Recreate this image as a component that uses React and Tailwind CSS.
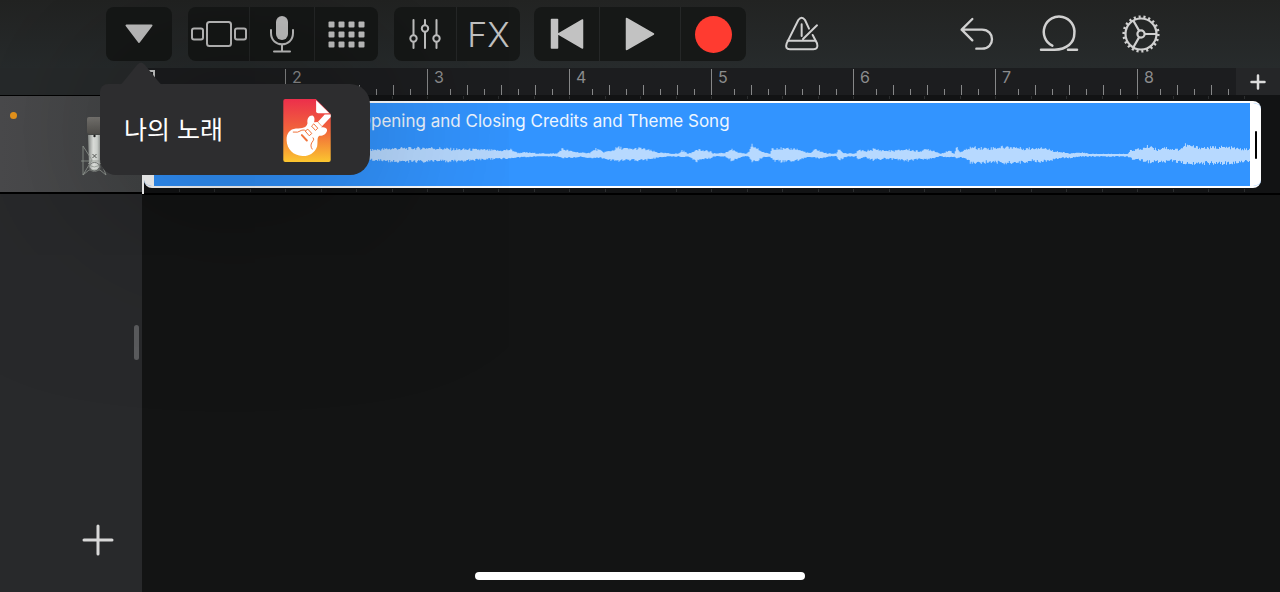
import React from "react";

const BARS = [1, 2, 3, 4, 5, 6, 7, 8];

// [x, height above the centre line, height below it], in thirds of a pixel
const ENVELOPE = [
  [0, 14, 14], [60, 18, 16], [120, 10, 12], [180, 16, 14], [216, 14, 13], [237, 18, 18], [275, 20, 18],
  [300, 16, 17], [325, 15, 13], [345, 12, 10], [356, 15, 10], [363, 6, 6], [372, 7, 6], [385, 4, 4],
  [402, 4, 4], [407, 17, 8], [417, 10, 7], [427, 6, 5], [435, 6, 9], [441, 17, 7], [449, 8, 9],
  [457, 12, 15], [463, 21, 16], [475, 16, 14], [485, 19, 15], [495, 13, 12], [503, 7, 8], [515, 4, 4],
  [524, 4, 4], [527, 13, 6], [533, 4, 4], [536, 5, 8], [542, 18, 18], [547, 12, 12], [556, 10, 9],
  [558, 4, 4], [570, 6, 4], [577, 16, 16], [583, 8, 9], [590, 3, 3], [594, 8, 5], [597, 27, 18],
  [603, 16, 15], [608, 8, 6], [613, 4, 4], [615, 4, 4], [617, 19, 12], [622, 20, 18], [630, 16, 18],
  [640, 18, 16], [648, 10, 10], [655, 5, 5], [661, 16, 9], [667, 8, 9], [673, 4, 4], [681, 4, 4],
  [684, 18, 14], [688, 6, 9], [693, 4, 4], [701, 4, 4], [703, 14, 12], [710, 10, 6], [718, 16, 14],
  [730, 12, 10], [740, 12, 12], [752, 16, 16], [763, 10, 12], [773, 16, 11], [779, 12, 8], [785, 4, 4],
  [795, 11, 6], [799, 4, 5], [801, 22, 10], [805, 8, 5], [810, 14, 11], [815, 21, 21], [825, 20, 24],
  [835, 18, 18], [845, 22, 22], [857, 22, 22], [867, 18, 21], [877, 18, 16], [886, 22, 19], [895, 14, 14],
  [905, 8, 8], [915, 4, 8], [925, 7, 4], [935, 3, 4], [955, 3, 4], [972, 3, 4], [976, 14, 10],
  [985, 16, 15], [995, 26, 21], [1002, 14, 18], [1008, 22, 20], [1017, 16, 16], [1025, 16, 22],
  [1030, 28, 24], [1040, 22, 26], [1052, 20, 22], [1065, 22, 23], [1077, 20, 24], [1085, 16, 18], [1095, 16, 18],
];

const sampleEnvelope = (x) => {
  const next = ENVELOPE.findIndex((point) => point[0] > x);
  const b = next === -1 ? ENVELOPE[ENVELOPE.length - 1] : ENVELOPE[next];
  const a = next > 0 ? ENVELOPE[next - 1] : b;
  const t = b[0] === a[0] ? 0 : (x - a[0]) / (b[0] - a[0]);
  return [a[1] + (b[1] - a[1]) * t, a[2] + (b[2] - a[2]) * t];
};

const noise = (n) => {
  const v = Math.sin(n * 12.9898) * 43758.5453;
  return v - Math.floor(v);
};

const buildWave = () => {
  const top = [];
  const bottom = [];
  for (let x = 0; x < 1095; x += 1) {
    const [up, down] = sampleEnvelope(x);
    const y1 = Math.round(60 - up * (0.8 + noise(x) * 0.5));
    const y2 = Math.round(60 + down * (0.8 + noise(x + 500) * 0.5));
    top.push(`${x} ${y1} ${x + 1} ${y1}`);
    bottom.unshift(`${x + 1} ${y2} ${x} ${y2}`);
  }
  return `M${top.join(" ")} ${bottom.join(" ")}Z`;
};

const WAVE_PATH = buildWave();

const ToolButton = ({ label, className = "w-[63px]", children }) => (
  <button
    type="button"
    aria-label={label}
    className={`flex h-[54px] shrink-0 items-center justify-center bg-[#161817] text-[#c2c2c2] ${className}`}
  >
    {children}
  </button>
);

const ToolGroup = ({ children }) => (
  <div className="flex shrink-0 divide-x divide-[#252727] overflow-hidden rounded-lg">{children}</div>
);

const PlainButton = ({ label, children }) => (
  <button type="button" aria-label={label} className="flex size-11 shrink-0 items-center justify-center text-[#d0d0d0]">
    {children}
  </button>
);

const MetronomeIcon = () => (
  <svg viewBox="74 48 108 108" className="size-9" fill="none" stroke="currentColor" strokeWidth="6" strokeLinecap="round" strokeLinejoin="round">
    <path d="M149 86 L137 60 Q127 46 117 60 L82 130 Q76 148 92 148 H162 Q178 148 173 130 L160 105" />
    <path d="M85 122 H168 M127 73 V108 M131 117 L173 76" />
  </svg>
);

const UndoIcon = () => (
  <svg viewBox="598 48 108 108" className="size-9" fill="none" stroke="currentColor" strokeWidth="7" strokeLinecap="round" strokeLinejoin="round">
    <path d="M638 57 L606 89 L638 121 M606 89 H667 C707 89 707 146 667 146 H650" />
  </svg>
);

const LoopIcon = () => (
  <svg viewBox="837 42 120 120" className="size-10" fill="none" stroke="currentColor" strokeWidth="7.5" strokeLinecap="round">
    <path d="M843 149 H884 C920 148 943 128 943 101 A46 46 0 1 0 877 137" />
    <path d="M924 149 H951" />
  </svg>
);

const GearIcon = () => (
  <svg viewBox="-20 -20 40 40" className="size-10" fill="none" stroke="currentColor" strokeWidth="2.2">
    <circle r="15.5" />
    <circle r="17.2" strokeWidth="2.8" pathLength="66" strokeDasharray="1.3 1.7" />
    <circle r="3.6" />
    <path d="M3.6 0 H15 M-1.8 -3.1 L-7.6 -13.2 M-1.8 3.1 L-7.6 13.2" />
  </svg>
);

const SongFileIcon = () => (
  <svg viewBox="40 27 143 190" className="h-[63px] w-12 shrink-0">
    <defs>
      <linearGradient id="song-file" x1="0" y1="0" x2="0" y2="1">
        <stop offset="0" stopColor="#ec2f4b" />
        <stop offset="0.5" stopColor="#f1663b" />
        <stop offset="1" stopColor="#fbc62f" />
      </linearGradient>
    </defs>
    <path d="M46 27 H138 L183 72 V211 Q183 217 177 217 H46 Q40 217 40 211 V33 Q40 27 46 27Z" fill="url(#song-file)" />
    <path d="M139 31 V64 Q139 70 145 70 H179Z" fill="#fff" />
    <path
      d="M50 152 C49 130 60 118 78 116 C98 115 110 114 113 100 C111 87 117 77 127 77 C135 79 135 89 133 97 L144 96 L165 74 H183 V81 L154 112 C162 112 173 113 172 122 C170 134 158 139 149 138 C140 143 145 158 142 170 C135 190 116 200 98 199 C70 197 51 178 50 152Z"
      fill="#fff"
    />
    <g fill="none" stroke="#f0733a" strokeWidth="3" strokeLinecap="round" strokeLinejoin="round">
      <path d="M70 127 Q84 130 96 121 Q104 118 108 124" />
      <path d="M127 178 Q118 166 130 153 Q134 148 130 144" />
      <path d="M107 123 L114 118 L126 131 L119 137Z M126 108 L132 102 L144 115 L138 121Z" />
      <path d="M96 136 L111 152" strokeWidth="6" />
      <path d="M145 97 L155 108" strokeWidth="2" />
    </g>
  </svg>
);

const MicrophonePicture = () => (
  <svg viewBox="0 0 26 60" className="h-[60px] w-[26px]" fill="none">
    <defs>
      <linearGradient id="mic-head" x1="0" x2="0" y1="0" y2="1">
        <stop offset="0" stopColor="#7b7975" />
        <stop offset="1" stopColor="#55534f" />
      </linearGradient>
      <linearGradient id="mic-body" x1="0" x2="1" y1="0" y2="0">
        <stop offset="0" stopColor="#8d918e" />
        <stop offset="0.4" stopColor="#eef1ed" />
        <stop offset="0.7" stopColor="#dfe3df" />
        <stop offset="1" stopColor="#8d918e" />
      </linearGradient>
    </defs>
    <rect x="6" y="0" width="15" height="17" rx="2" fill="url(#mic-head)" />
    <path d="M7 17 H20 L19 50 Q13 57 8 50Z" fill="url(#mic-body)" />
    <path d="M7 17.500 H20" stroke="#4b4d4b" />
    <circle cx="13.500" cy="19" r="1.200" fill="#222" />
    <path d="M11.500 37 L15.500 41 M15.500 37 L11.500 41" stroke="#5b5e5c" />
    <path
      d="M2 29 L11 43 L2 58 L8 53 H19 L25 58 L19 42 L24 29 M2 29 V58 M0 44 H24 M7 46 Q13 54 20 46"
      stroke="#9ba19b"
      strokeWidth="0.8"
    />
    <ellipse cx="13.500" cy="50" rx="5.500" ry="4.500" stroke="#7c807d" />
  </svg>
);

const SongPopover = () => (
  <div className="absolute top-[77px] -left-1.5 z-20 w-[270px]">
    <svg viewBox="0 0 44 23" className="absolute -top-[22px] left-[19px] h-[23px] w-11" fill="#2d2d2f">
      <path d="M0 23 Q3 22 5 19 L18 3 Q22 -2 26 3 L39 19 Q41 22 44 23Z" />
    </svg>
    <button
      type="button"
      className="flex h-[91px] w-full items-center justify-between rounded-tl-lg rounded-r-[20px] rounded-bl-2xl bg-[#2d2d2f] pt-0.5 pr-[39px] pl-6 text-[25px] text-white shadow-[0_0_200px_rgba(0,0,0,0.55)]"
    >
      <span className="whitespace-nowrap">나의 노래</span>
      <SongFileIcon />
    </button>
  </div>
);

const Toolbar = () => (
  <header className="flex h-[68px] items-start justify-between bg-linear-to-b from-[#222322] to-[#272b2c] pt-[7px] pr-[117px] pl-[106px]">
    <div className="flex gap-3.5">
      <div className="flex gap-4">
        <div className="relative">
          <ToolButton label="보기" className="w-[66px] rounded-lg">
            <svg viewBox="0 0 28 20" className="h-5 w-7" fill="currentColor" stroke="currentColor" strokeWidth="2" strokeLinejoin="round">
              <path d="M1.500 1.500 H26.500 L14 18Z" />
            </svg>
          </ToolButton>
          <SongPopover />
        </div>
        <ToolGroup>
          <ToolButton label="악기" className="w-[62px]">
            <svg viewBox="0 0 56 26" className="h-[26px] w-14" fill="none" stroke="currentColor" strokeWidth="2">
              <rect x="16" y="1" width="24" height="24" rx="2.500" />
              <rect x="1" y="7.500" width="11" height="11" rx="2" />
              <rect x="44" y="7.500" width="11" height="11" rx="2" />
            </svg>
          </ToolButton>
          <ToolButton label="녹음 보기" className="w-[65px]">
            <svg viewBox="0 0 26 38" className="h-[38px] w-[26px]" fill="none" stroke="currentColor" strokeWidth="2" strokeLinecap="round">
              <rect x="7" y="1" width="12" height="24" rx="6" fill="currentColor" stroke="none" />
              <path d="M2 15 V18 C2 33 24 33 24 18 V15 M13 30 V36 M5 36.500 H21" />
            </svg>
          </ToolButton>
          <ToolButton label="라이브 루프">
            <svg viewBox="0 0 37 27" className="h-[27px] w-[37px]" fill="currentColor">
              {[0, 10, 20].map((y) =>
                [0, 10, 20, 30].map((x) => <rect key={`${x}-${y}`} x={x + 0.5} y={y + 0.5} width="6" height="6" rx="1" />)
              )}
            </svg>
          </ToolButton>
        </ToolGroup>
        <ToolGroup>
          <ToolButton label="트랙 제어">
            <svg viewBox="0 0 32 30" className="h-[30px] w-8" fill="none" stroke="currentColor" strokeWidth="2" strokeLinecap="round">
              <path d="M4.500 1 V16 M4.500 23 V29 M16 1 V6 M16 13 V29 M27.500 1 V16 M27.500 23 V29" />
              <circle cx="4.500" cy="19.500" r="3.200" />
              <circle cx="16" cy="9.500" r="3.200" />
              <circle cx="27.500" cy="19.500" r="3.200" />
            </svg>
          </ToolButton>
          <ToolButton label="FX" className="w-[63px] text-[34px] font-[350]">
            FX
          </ToolButton>
        </ToolGroup>
      </div>
      <ToolGroup>
        <ToolButton label="처음으로" className="w-[66px]">
          <svg viewBox="0 0 34 32" className="h-8 w-[34px]" fill="currentColor" stroke="currentColor" strokeWidth="1.500" strokeLinejoin="round">
            <path d="M1.500 1.500 H7.500 V30 H1.500Z M32.500 2 V30 L8.500 16Z" />
          </svg>
        </ToolButton>
        <ToolButton label="재생" className="w-[81px]">
          <svg viewBox="0 0 30 34" className="h-[34px] w-[30px]" fill="currentColor" stroke="currentColor" strokeWidth="1.500" strokeLinejoin="round">
            <path d="M1.500 1.500 L28.500 17 L1.500 32.500Z" />
          </svg>
        </ToolButton>
        <ToolButton label="녹음" className="w-[65px]">
          <span className="size-[37px] rounded-full bg-[#ff3b30]" />
        </ToolButton>
      </ToolGroup>
      <div className="flex h-[54px] items-center pl-5">
        <PlainButton label="메트로놈">
          <MetronomeIcon />
        </PlainButton>
      </div>
    </div>
    <div className="flex h-[54px] items-center gap-[38px]">
      <PlainButton label="실행 취소">
        <UndoIcon />
      </PlainButton>
      <PlainButton label="루프">
        <LoopIcon />
      </PlainButton>
      <PlainButton label="설정">
        <GearIcon />
      </PlainButton>
    </div>
  </header>
);

const Bar = ({ number }) => (
  <div className="flex w-[142px] shrink-0 items-end pt-px">
    <div className="h-full flex-1 border-l border-[#868788] pl-1.5 text-base/4 text-[#8b8c8d]">
      {number > 1 && number}
    </div>
    {[1, 2, 3, 4, 5, 6, 7].map((tick) => (
      <div key={tick} className={`flex-1 border-l border-[#868788] ${tick % 2 ? "h-1.5" : "h-2.5"}`} />
    ))}
  </div>
);

const GridMarks = () => (
  <div className="flex h-[5px] overflow-hidden py-px">
    {BARS.map((bar) => (
      <div key={bar} className="flex w-[142px] shrink-0">
        {[0, 1, 2, 3].map((beat) => (
          <div key={beat} className="flex-1 border-l border-[#2c2e2f]" />
        ))}
      </div>
    ))}
  </div>
);

const Region = () => (
  <div className="mr-[19px] ml-0.5 flex h-[87px] overflow-hidden rounded-lg border-y-2 border-white bg-[#3294ff]">
    <div className="w-2.5 shrink-0 bg-white" />
    <div className="flex min-w-0 flex-1 flex-col">
      <p className="truncate pt-1.5 pl-[204px] text-[17px]/6 text-[#eef6ff]">
        Opening and Closing Credits and Theme Song
      </p>
      <svg viewBox="0 0 1095 120" preserveAspectRatio="none" className="mt-0.5 h-10 w-full" fill="#b7d9ff">
        <path d={WAVE_PATH} />
      </svg>
    </div>
    <div className="flex w-[11px] shrink-0 items-center justify-center bg-white">
      <div className="h-7 w-0.5 rounded-full bg-black" />
    </div>
  </div>
);

const TrackHeaders = () => (
  <aside className="flex w-[142px] shrink-0 flex-col bg-[#28292b]">
    <div className="h-7 border-b border-black bg-[#272a2b]" />
    <div className="flex h-[98px] justify-between border-b-2 border-black bg-linear-to-r from-[#4b4b4d] to-[#434546] pt-4 pr-[35px] pl-2.5">
      <span className="size-[7px] rounded-full bg-[#e8951c]" />
      <div className="pt-[5px]">
        <MicrophonePicture />
      </div>
    </div>
    <div className="relative flex flex-1 items-end justify-end pr-7 pb-9">
      <div className="absolute top-[131px] right-[3px] h-[35px] w-[5px] rounded-full bg-[#5a5b5d]" />
      <button type="button" aria-label="트랙 추가" className="text-[#d8d8d8]">
        <svg viewBox="0 0 32 32" className="size-8" stroke="currentColor" strokeWidth="3" strokeLinecap="round">
          <path d="M16 2 V30 M2 16 H30" />
        </svg>
      </button>
    </div>
  </aside>
);

const Timeline = () => (
  <main className="relative min-w-0 flex-1 bg-[#131414]">
    <div className="flex h-[27px]">
      <div className="flex min-w-0 flex-1 overflow-hidden bg-[#1c1d1f] pl-px">
        {BARS.map((bar) => (
          <Bar key={bar} number={bar} />
        ))}
      </div>
      <button type="button" aria-label="마디 추가" className="flex w-11 shrink-0 items-center justify-center bg-[#252628] text-[#dcdcdc]">
        <svg viewBox="0 0 16 16" className="size-4" stroke="currentColor" strokeWidth="2.500" strokeLinecap="round">
          <path d="M8 1.500 V14.500 M1.500 8 H14.500" />
        </svg>
      </button>
    </div>
    <div className="border-b-2 border-black bg-[#121314]">
      <div className="pb-px pl-px">
        <GridMarks />
      </div>
      <Region />
      <div className="pl-px">
        <GridMarks />
      </div>
    </div>
    {/* playhead */}
    <div className="absolute top-px left-0 h-[125px] w-[2px] bg-white" />
    <div className="absolute top-0.5 left-0 h-4 w-[13px] border-2 border-[#c9caca]" />
  </main>
);

export default function App() {
  return (
    <div className="relative flex min-h-screen flex-col overflow-hidden bg-[#131414] font-[Inter,'Noto_Sans_CJK_KR',sans-serif]">
      <Toolbar />
      <div className="flex flex-1">
        <TrackHeaders />
        <Timeline />
      </div>
      <div className="absolute bottom-3 left-1/2 h-2 w-[330px] -translate-x-1/2 rounded-full bg-white" />
    </div>
  );
}
